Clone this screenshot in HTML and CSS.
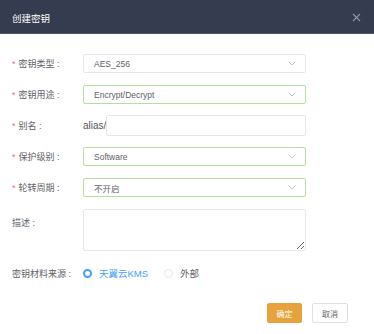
FILE: index.html
```html
<!DOCTYPE html>
<html>
	<head>
		<meta charset="UTF-8">
		<title>创建密钥</title>
		<link rel="stylesheet" href="styles.css">
	</head>
	<body>
		<div class="dialog">
			<div class="dialog-header">
				<span class="dialog-title">创建密钥</span>
				<span class="dialog-close">
					<svg width="9" height="9" viewBox="0 0 9 9"><path d="M1 1L8 8M8 1L1 8" stroke="#8f96a8" stroke-width="1.1" fill="none"/></svg>
				</span>
			</div>
			<div class="dialog-body">
				<div class="form-row">
					<label class="form-label"><i class="req">*</i>密钥类型 :</label>
					<div class="select">
						<span>AES_256</span>
						<svg class="arrow" width="8" height="5" viewBox="0 0 8 5"><path d="M0.5 0.5L4 4L7.5 0.5" stroke="#c0c4cc" fill="none"/></svg>
					</div>
				</div>
				<div class="form-row">
					<label class="form-label"><i class="req">*</i>密钥用途 :</label>
					<div class="select ok">
						<span>Encrypt/Decrypt</span>
						<svg class="arrow" width="8" height="5" viewBox="0 0 8 5"><path d="M0.5 0.5L4 4L7.5 0.5" stroke="#c0c4cc" fill="none"/></svg>
					</div>
				</div>
				<div class="form-row">
					<label class="form-label"><i class="req">*</i>别名 :</label>
					<div class="alias">
						<span class="prefix">alias/</span>
						<input class="text-input" type="text" value="">
					</div>
				</div>
				<div class="form-row">
					<label class="form-label"><i class="req">*</i>保护级别 :</label>
					<div class="select ok">
						<span>Software</span>
						<svg class="arrow" width="8" height="5" viewBox="0 0 8 5"><path d="M0.5 0.5L4 4L7.5 0.5" stroke="#c0c4cc" fill="none"/></svg>
					</div>
				</div>
				<div class="form-row">
					<label class="form-label"><i class="req">*</i>轮转周期 :</label>
					<div class="select ok">
						<span>不开启</span>
						<svg class="arrow" width="8" height="5" viewBox="0 0 8 5"><path d="M0.5 0.5L4 4L7.5 0.5" stroke="#c0c4cc" fill="none"/></svg>
					</div>
				</div>
				<div class="form-row top">
					<label class="form-label plain">描述 :</label>
					<textarea class="textarea"></textarea>
				</div>
				<div class="form-row radios">
					<label class="form-label plain">密钥材料来源 :</label>
					<div class="radio checked"><span class="dot"></span>天翼云KMS</div>
					<div class="radio"><span class="dot"></span>外部</div>
				</div>
			</div>
			<div class="dialog-footer">
				<span class="btn primary">确定</span>
				<span class="btn">取消</span>
			</div>
		</div>
	</body>
</html>
```

FILE: styles.css
```css
*{
	box-sizing: border-box;
	margin: 0;
	padding: 0;
}
html, body{
	width: 374px;
	height: 334px;
	overflow: hidden;
	background: #fff;
}
body{
	font-family: "Liberation Sans", "Noto Sans CJK SC", sans-serif;
	font-size: 9px;
	color: #606266;
}
.dialog{
	width: 374px;
	height: 334px;
	background: #fff;
}
.dialog-header{
	height: 34px;
	background: #353c4f;
	border-bottom: 1px solid #4c5468;
	display: flex;
	align-items: center;
	justify-content: space-between;
	padding: 0 13px 0 12px;
}
.dialog-title{
	color: #fff;
	font-size: 9.5px;
	padding-top: 2px;
}
.dialog-close{
	display: flex;
	padding-top: 1px;
}
.dialog-body{
	padding: 20px 0 0 12px;
}
.form-row{
	display: flex;
	align-items: center;
	height: 19px;
	margin-bottom: 12px;
}
.form-row.top{
	align-items: flex-start;
	height: 42px;
}
.form-row.top .form-label{
	padding-top: 7px;
}
.form-row.radios{
	height: 20px;
	margin-top: 0;
}
.form-label{
	width: 71px;
	flex: none;
	white-space: nowrap;
}
.req{
	font-style: normal;
	color: #f56c6c;
	margin-right: 3px;
}
.select{
	width: 223px;
	height: 19px;
	border: 1px solid #e4e7ed;
	border-radius: 2px;
	display: flex;
	align-items: center;
	justify-content: space-between;
	padding: 0 9px 0 10px;
	color: #606266;
	font-size: 8.5px;
}
.select.ok{
	border-color: #b3e19d;
}
.alias{
	display: flex;
	align-items: center;
	width: 223px;
}
.prefix{
	font-size: 10px;
	color: #555;
	width: 23px;
}
.text-input{
	width: 200px;
	height: 21px;
	border: 1px solid #e4e7ed;
	border-radius: 2px;
	outline: none;
}
.textarea{
	width: 223px;
	height: 42px;
	border: 1px solid #e4e7ed;
	border-radius: 2px;
	resize: vertical;
	outline: none;
}
.radio{
	display: flex;
	align-items: center;
	font-size: 9.5px;
	color: #606266;
	margin-right: 16px;
}
.radio .dot{
	width: 9px;
	height: 9px;
	border-radius: 50%;
	border: 1px solid #e4e7ed;
	margin-right: 7px;
	background: #fff;
}
.radio.checked{
	color: #409eff;
}
.radio.checked .dot{
	border: 2.5px solid #409eff;
}
.dialog-footer{
	display: flex;
	justify-content: flex-end;
	padding: 8px 26px 0 0;
}
.btn{
	width: 36px;
	height: 20px;
	border: 1px solid #dcdfe6;
	border-radius: 2px;
	display: flex;
	align-items: center;
	justify-content: center;
	font-size: 8px;
	color: #606266;
	margin-left: 10px;
	background: #fff;
}
.btn.primary{
	width: 35px;
	background: #e6a23c;
	border-color: #e6a23c;
	color: #fff;
}
```
